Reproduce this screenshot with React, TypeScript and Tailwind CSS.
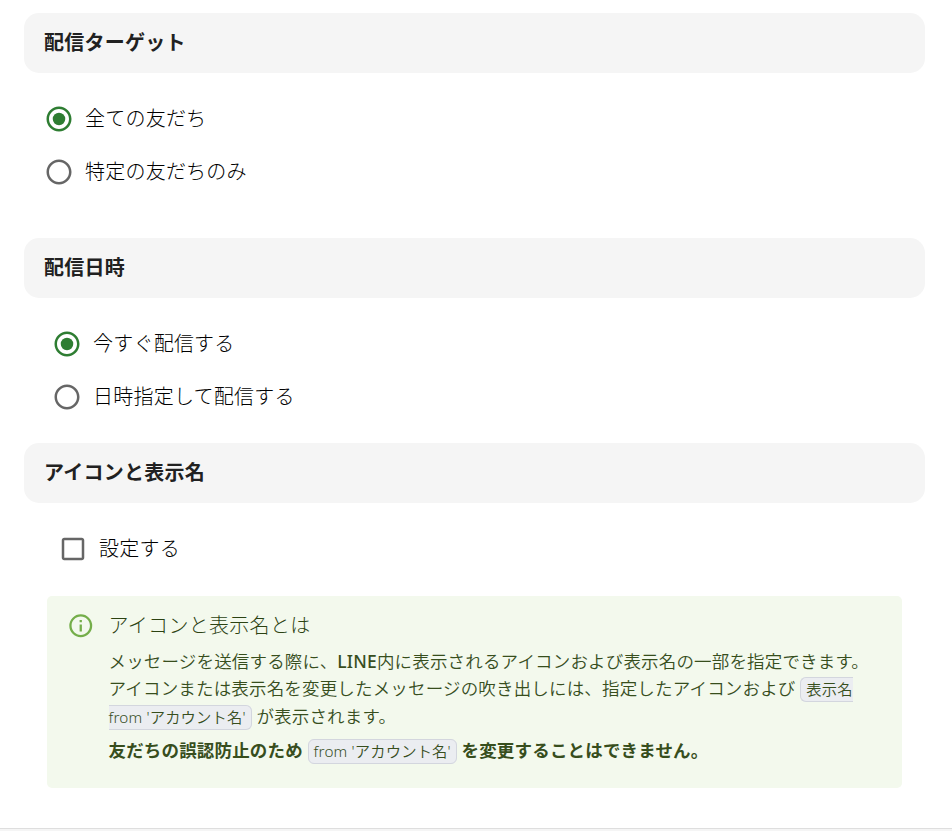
import type { ReactNode } from "react";

function SectionHeader({ children }: { children: ReactNode }) {
  return (
    <h2 className="flex h-[60px] items-center rounded-[15px] bg-[#f5f5f5] px-5 text-[20px] font-bold leading-[30px] tracking-[0.25px]">
      {children}
    </h2>
  );
}

function Radio({ label, checked = false }: { label: string; checked?: boolean }) {
  return (
    <label className="flex h-[53px] items-center gap-[11px]">
      <svg viewBox="0 0 24 24" className={checked ? "size-[30px] fill-[#2e7d32]" : "size-[30px] fill-[#666666]"}>
        <path d="M12 2C6.48 2 2 6.48 2 12s4.48 10 10 10 10-4.48 10-10S17.52 2 12 2zm0 18c-4.42 0-8-3.58-8-8s3.58-8 8-8 8 3.58 8 8-3.58 8-8 8z" />
        {checked && <circle cx="12" cy="12" r="5" />}
      </svg>
      <span className="text-[20px] font-light leading-[30px] tracking-[0.22px] text-black">{label}</span>
    </label>
  );
}

function Code({ children }: { children: ReactNode }) {
  return (
    <code className="rounded-[6px] border border-[#d3d6de] bg-[#ebedf1] px-[5px] pb-[2px] pt-px font-[inherit] text-[15.3px] font-[350]">
      {children}
    </code>
  );
}

export default function App() {
  return (
    <main className="flex h-[831px] flex-col overflow-hidden bg-white font-['Noto_Sans','Noto_Sans_CJK_JP',sans-serif] text-[#212121]">
      <div className="flex h-[828px] flex-col pl-6 pr-[27px] pt-[13px]">
        <section className="h-[225px]">
          <SectionHeader>配信ターゲット</SectionHeader>
          <div className="pl-5 pt-[19.5px]">
            <Radio label="全ての友だち" checked />
            <Radio label="特定の友だちのみ" />
          </div>
        </section>
        <section className="h-[205px]">
          <SectionHeader>配信日時</SectionHeader>
          <div className="pl-7 pt-[19.5px]">
            <Radio label="今すぐ配信する" checked />
            <Radio label="日時指定して配信する" />
          </div>
        </section>
        <section>
          <SectionHeader>アイコンと表示名</SectionHeader>
          <label className="mt-[31px] flex h-[30px] items-center gap-[11px] pl-[34px]">
            <svg viewBox="0 0 24 24" className="size-[30px] fill-[#666666]">
              <path d="M19 5v14H5V5h14m0-2H5c-1.1 0-2 .9-2 2v14c0 1.1.9 2 2 2h14c1.1 0 2-.9 2-2V5c0-1.1-.9-2-2-2z" />
            </svg>
            <span className="text-[20px] font-light leading-[30px] tracking-[0.22px] text-black">設定する</span>
          </label>
          <div className="ml-[23px] mr-[23px] mt-8 flex h-[192px] rounded-[5px] bg-[#f3f9ed] pl-5 text-[#374e1d]">
            <svg viewBox="0 0 24 24" className="mt-4 size-[27.5px] shrink-0 fill-[#74ae4a]">
              <path d="M11,9H13V7H11M12,20C7.59,20 4,16.41 4,12C4,7.59 7.59,4 12,4C16.41,4 20,7.59 20,12C20,16.41 16.41,20 12,20M12,2A10,10 0 0,0 2,12A10,10 0 0,0 12,22A10,10 0 0,0 22,12A10,10 0 0,0 12,2M11,17H13V11H11V17Z" />
            </svg>
            <div className="ml-[14px] whitespace-nowrap pt-[15px] text-[17.5px] font-[350] leading-[27px] tracking-[0.17px]">
              <h3 className="mb-[7px] text-[20px] font-light leading-[30px] tracking-[0.3px] text-[#2b4212]">アイコンと表示名とは</h3>
              <p>
                メッセージを送信する際に、<span className="font-medium">LINE</span>内に表示されるアイコンおよび表示名の一部を指定できます。
                <br />
                アイコンまたは表示名を変更したメッセージの吹き出しには、指定したアイコンおよび{" "}
                <Code>表示名<br />from 'アカウント名'</Code> が表示されます。
              </p>
              <p className="mt-[6px] font-bold">
                友だちの誤認防止のため <Code>from 'アカウント名'</Code> を変更することはできません。
              </p>
            </div>
          </div>
        </section>
      </div>
      <footer className="h-[3px] border-t border-[#dedede] bg-[#f5f5f5]" />
    </main>
  );
}
